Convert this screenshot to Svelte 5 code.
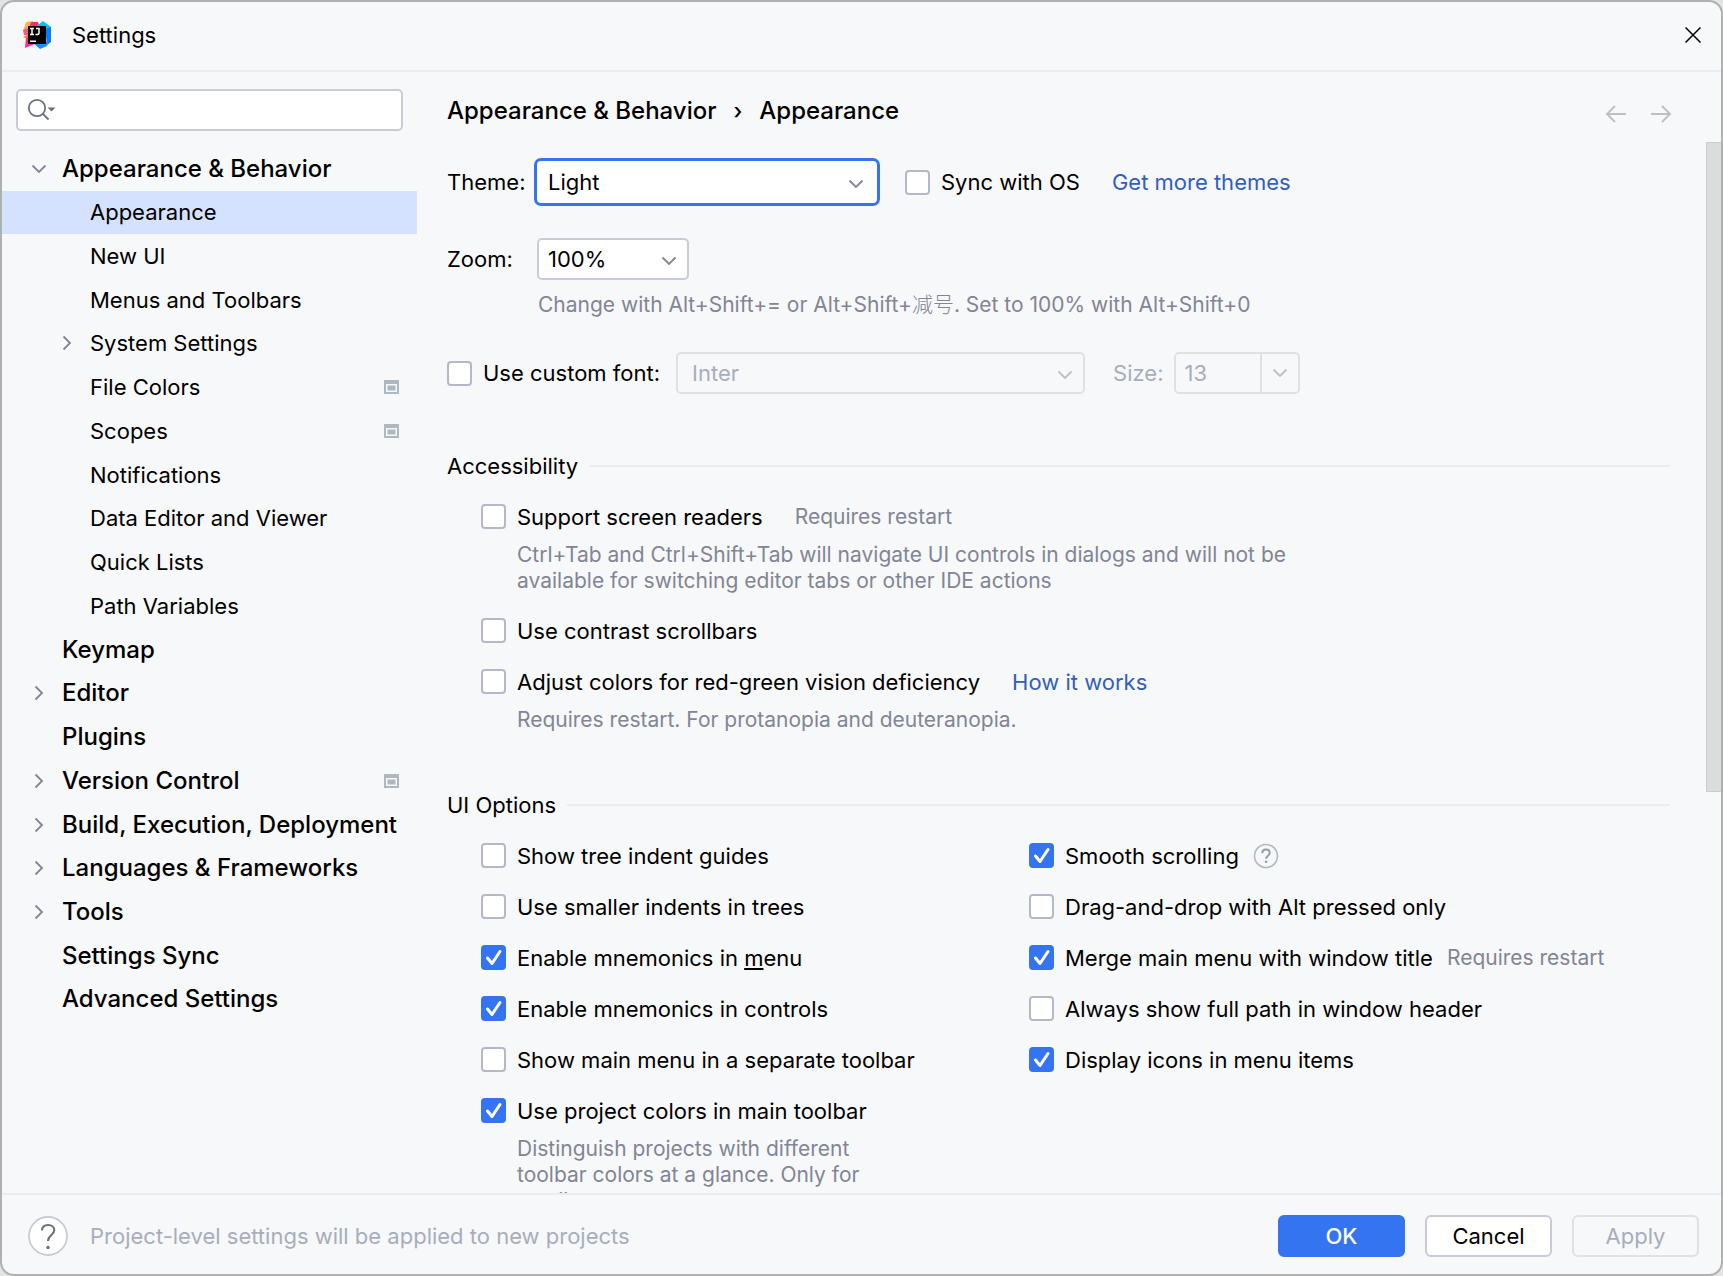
<script lang="ts">
	interface TreeItem {
		label: string;
		level: number;
		arrow?: 'open' | 'closed';
		project?: boolean;
		selected?: boolean;
	}

	interface Option {
		label: string;
		checked: boolean;
		mnemonic?: string;
		note?: string;
		help?: boolean;
		hint?: string;
	}

	const tree: TreeItem[] = [
		{ label: 'Appearance & Behavior', level: 0, arrow: 'open' },
		{ label: 'Appearance', level: 1, selected: true },
		{ label: 'New UI', level: 1 },
		{ label: 'Menus and Toolbars', level: 1 },
		{ label: 'System Settings', level: 1, arrow: 'closed' },
		{ label: 'File Colors', level: 1, project: true },
		{ label: 'Scopes', level: 1, project: true },
		{ label: 'Notifications', level: 1 },
		{ label: 'Data Editor and Viewer', level: 1 },
		{ label: 'Quick Lists', level: 1 },
		{ label: 'Path Variables', level: 1 },
		{ label: 'Keymap', level: 0 },
		{ label: 'Editor', level: 0, arrow: 'closed' },
		{ label: 'Plugins', level: 0 },
		{ label: 'Version Control', level: 0, arrow: 'closed', project: true },
		{ label: 'Build, Execution, Deployment', level: 0, arrow: 'closed' },
		{ label: 'Languages & Frameworks', level: 0, arrow: 'closed' },
		{ label: 'Tools', level: 0, arrow: 'closed' },
		{ label: 'Settings Sync', level: 0 },
		{ label: 'Advanced Settings', level: 0 }
	];

	let leftOptions: Option[] = $state([
		{ label: 'Show tree indent guides', checked: false },
		{ label: 'Use smaller indents in trees', checked: false },
		{ label: 'Enable mnemonics in ', mnemonic: 'menu', checked: true },
		{ label: 'Enable mnemonics in controls', checked: true },
		{ label: 'Show main menu in a separate toolbar', checked: false },
		{
			label: 'Use project colors in main toolbar',
			checked: true,
			hint: 'Distinguish projects with different toolbar colors at a glance. Only for small'
		}
	]);

	let rightOptions: Option[] = $state([
		{ label: 'Smooth scrolling', checked: true, help: true },
		{ label: 'Drag-and-drop with Alt pressed only', checked: false },
		{ label: 'Merge main menu with window title', checked: true, note: 'Requires restart' },
		{ label: 'Always show full path in window header', checked: false },
		{ label: 'Display icons in menu items', checked: true }
	]);

	let syncWithOs = $state(false);
	let customFont = $state(false);
	let screenReaders = $state(false);
	let contrastScrollbars = $state(false);
	let adjustColors = $state(false);
</script>

{#snippet chevron()}
	<svg class="chevron" width="16" height="10" viewBox="0 0 16 10" aria-hidden="true">
		<path d="M1.5 1.5 8 8l6.500-6.500" fill="none" stroke="currentColor" stroke-width="1.800" />
	</svg>
{/snippet}

{#snippet optionList(options: Option[])}
	<div class="column">
		{#each options as option}
			<div class="option">
				<div class="line">
					<label class="check">
						<input type="checkbox" bind:checked={option.checked} />
						<span
							>{option.label}{#if option.mnemonic}<u>{option.mnemonic[0]}</u>{option.mnemonic.slice(
									1
								)}{/if}</span
						>
					</label>
					{#if option.help}
						<button class="context-help" aria-label="Help">
							<svg width="26" height="26" viewBox="0 0 26 26">
								<circle cx="13" cy="13" r="11.500" fill="none" stroke="#aeb9c0" stroke-width="1.600" />
								<path
									d="M9.300 10.300c0-2.300 1.500-3.700 3.700-3.700s3.700 1.300 3.700 3.300c0 2.700-3.600 2.900-3.600 5.800"
									fill="none"
									stroke="#929ea5"
									stroke-width="2"
								/>
								<circle cx="13.100" cy="18.800" r="1.300" fill="#929ea5" />
							</svg>
						</button>
					{/if}
					{#if option.note}
						<span class="note">{option.note}</span>
					{/if}
				</div>
				{#if option.hint}
					<p class="hint narrow">{option.hint}</p>
				{/if}
			</div>
		{/each}
	</div>
{/snippet}

<div class="window">
	<header class="titlebar">
		<svg class="logo" width="28" height="28" viewBox="0 0 28 28" aria-hidden="true">
			<path d="M3 1 10 0l2 6-9 6-3-2z" fill="#fdb64e" />
			<path d="M8 1h7l2 6H6z" fill="#fe2d6b" />
			<path d="m0 9 7-3v9l-6-1z" fill="#f7509c" />
			<path d="m0 16 7-3v6z" fill="#fc801d" />
			<path d="m15 4 5-4 8 6v4l-4 2-9-4z" fill="#07c3f2" />
			<path d="m22 8 6-2v15l-4 3z" fill="#087cfa" />
			<path d="m3 17 3-1 6 7-10 4z" fill="#fe2d8b" />
			<path d="m10 22 15-2-1 5-7 3z" fill="#178ff5" />
			<rect x="5" y="5" width="18" height="18" fill="#000" />
			<path
				d="M7 7.500h4M9 7.500v6M7 13.500h4M13 7.500h3v4.500q0 1.500-1.500 1.500h-2"
				fill="none"
				stroke="#fff"
				stroke-width="1.500"
			/>
			<rect x="7" y="19.500" width="6" height="1.500" fill="#fff" />
		</svg>
		<h1>Settings</h1>
		<button class="close" aria-label="Close">
			<svg width="16" height="16" viewBox="0 0 16 16">
				<path d="m.5.5 15 15m0-15-15 15" stroke="#000" stroke-width="1.500" />
			</svg>
		</button>
	</header>

	<div class="body">
		<aside class="sidebar">
			<div class="search">
				<svg width="30" height="24" viewBox="0 0 30 24" aria-hidden="true">
					<circle cx="10" cy="10" r="8.200" fill="none" stroke="#6c707e" stroke-width="1.800" />
					<path d="m16 16 5.500 5.500" stroke="#6c707e" stroke-width="1.800" />
					<path d="M20.500 9.500h8L24.500 13.500z" fill="#6c707e" />
				</svg>
				<input type="text" aria-label="Search settings" />
			</div>
			<ul class="tree">
				{#each tree as item}
					<li>
						<button class="node" class:child={item.level === 1} class:selected={item.selected}>
							<span class="arrow" class:closed={item.arrow === 'closed'}>
								{#if item.arrow}{@render chevron()}{/if}
							</span>
							<span class="name">{item.label}</span>
							{#if item.project}
								<svg class="project" width="15" height="14" viewBox="0 0 15 14" aria-hidden="true">
									<path d="M0 0h15v14H0zM2 4v8h11V4z" fill="#adb8c0" fill-rule="evenodd" />
									<rect x="3.500" y="5.500" width="8" height="5" fill="#adb8c0" />
								</svg>
							{/if}
						</button>
					</li>
				{/each}
			</ul>
		</aside>

		<main>
			<div class="crumbs">
				<h2>Appearance &amp; Behavior</h2>
				<span class="sep">›</span>
				<h2>Appearance</h2>
				<nav>
					<button aria-label="Back">
						<svg width="22" height="18" viewBox="0 0 22 18">
							<path d="M21 9H2m8-8L2 9l8 8" fill="none" stroke="#bfbfc0" stroke-width="1.800" />
						</svg>
					</button>
					<button aria-label="Forward">
						<svg width="22" height="18" viewBox="0 0 22 18">
							<path d="M1 9h19m-8-8 8 8-8 8" fill="none" stroke="#bfbfc0" stroke-width="1.800" />
						</svg>
					</button>
				</nav>
			</div>

			<div class="scroll">
				<div class="row theme">
					<label class="caption" for="theme">Theme:</label>
					<div class="select focused">
						<select id="theme">
							<option>Light</option>
						</select>
						{@render chevron()}
					</div>
					<label class="check">
						<input type="checkbox" bind:checked={syncWithOs} />
						<span>Sync with OS</span>
					</label>
					<a class="more" href="#themes">Get more themes</a>
				</div>

				<div class="row zoom">
					<label class="caption" for="zoom">Zoom:</label>
					<div class="select">
						<select id="zoom">
							<option>100%</option>
						</select>
						{@render chevron()}
					</div>
				</div>
				<p class="hint zoom-hint">
					Change with Alt+Shift+= or Alt+Shift+<span class="cjk">减号</span>. Set to 100% with
					Alt+Shift+0
				</p>

				<div class="row font">
					<label class="check">
						<input type="checkbox" bind:checked={customFont} />
						<span>Use custom font:</span>
					</label>
					<div class="select wide disabled">
						<select aria-label="Font" disabled>
							<option>Inter</option>
						</select>
						{@render chevron()}
					</div>
					<label class="size" for="size">Size:</label>
					<div class="combo">
						<input id="size" type="text" value="13" disabled />
						<button disabled aria-label="Font sizes">{@render chevron()}</button>
					</div>
				</div>

				<section>
					<h3>Accessibility</h3>
					<div class="group">
						<div class="line">
							<label class="check">
								<input type="checkbox" bind:checked={screenReaders} />
								<span>Support screen readers</span>
							</label>
							<span class="note far">Requires restart</span>
						</div>
						<p class="hint">
							Ctrl+Tab and Ctrl+Shift+Tab will navigate UI controls in dialogs and will not be
							available for switching editor tabs or other IDE actions
						</p>
						<div class="line after-hint">
							<label class="check">
								<input type="checkbox" bind:checked={contrastScrollbars} />
								<span>Use contrast scrollbars</span>
							</label>
						</div>
						<div class="line next">
							<label class="check">
								<input type="checkbox" bind:checked={adjustColors} />
								<span>Adjust colors for red-green vision deficiency</span>
							</label>
							<a class="more" href="#vision">How it works</a>
						</div>
						<p class="hint">Requires restart. For protanopia and deuteranopia.</p>
					</div>
				</section>

				<section>
					<h3>UI Options</h3>
					<div class="group columns">
						{@render optionList(leftOptions)}
						{@render optionList(rightOptions)}
					</div>
				</section>
			</div>
			<div class="scrollbar"></div>
		</main>
	</div>

	<footer>
		<button class="help" aria-label="Help">
			<svg width="40" height="40" viewBox="0 0 40 40">
				<circle cx="20" cy="20" r="19" fill="#fff" stroke="#c9ccd6" stroke-width="1.800" />
				<path
					d="M14 14.500c0-3.500 2.600-5.500 6.200-5.500s6.100 2.200 6.100 5.300c0 4.700-6.300 4.700-6.300 10.700"
					fill="none"
					stroke="#6c707e"
					stroke-width="2"
				/>
				<circle cx="20" cy="31.500" r="1.700" fill="#6c707e" />
			</svg>
		</button>
		<p>Project-level settings will be applied to new projects</p>
		<button class="btn primary">OK</button>
		<button class="btn">Cancel</button>
		<button class="btn" disabled>Apply</button>
	</footer>
</div>

<style>
	:global(body) {
		background: #e4e4e5;
	}

	.window {
		box-sizing: border-box;
		display: flex;
		flex-direction: column;
		height: 100vh;
		overflow: hidden;
		border: 2px solid #b0b0b1;
		border-radius: 14px;
		background: #f7f8fa;
		color: #000;
		font-family: Inter, 'Noto Sans CJK SC', sans-serif;
		font-size: 22px;
		line-height: 28px;
	}

	.window * {
		box-sizing: border-box;
	}

	button,
	input,
	select {
		margin: 0;
		padding: 0;
		border: none;
		background: none;
		color: inherit;
		font: inherit;
	}

	svg {
		display: block;
		flex: none;
	}

	h1,
	h2,
	h3,
	p,
	ul {
		margin: 0;
		padding: 0;
		font-size: inherit;
		font-weight: 400;
	}

	a {
		color: #315fbd;
		text-decoration: none;
	}

	/* title bar */
	.titlebar {
		display: flex;
		flex: none;
		align-items: center;
		height: 70px;
		padding: 0 20px 2px 21px;
		border-bottom: 2px solid #ebecf0;
	}

	.titlebar h1 {
		flex: 1;
		margin-left: 21px;
	}

	/* sidebar */
	.body {
		display: flex;
		flex: 1;
		min-height: 0;
	}

	.sidebar {
		display: flex;
		flex: none;
		flex-direction: column;
		width: 415px;
		padding-top: 17px;
	}

	.search {
		display: flex;
		flex: none;
		align-items: center;
		height: 42px;
		margin: 0 14px;
		padding: 0 9px;
		border: 2px solid #c9ccd6;
		border-radius: 5px;
		background: #fff;
	}

	.search input {
		flex: 1;
		min-width: 0;
		outline: none;
	}

	.tree {
		display: flex;
		flex: 1;
		flex-direction: column;
		justify-content: space-between;
		max-height: 874px;
		margin-top: 16px;
		list-style: none;
	}

	.node {
		display: flex;
		align-items: center;
		width: 100%;
		height: 43px;
		padding: 0 18px 0 29px;
		font-size: 24px;
		font-weight: 500;
		text-align: left;
	}

	.node.child {
		padding-left: 57px;
		font-size: 22px;
		font-weight: 400;
	}

	.selected {
		background: #d4e2ff;
	}

	.arrow {
		width: 31px;
		color: #818594;
	}

	.arrow.closed .chevron {
		transform: rotate(-90deg);
	}

	.name {
		flex: 1;
		white-space: nowrap;
	}

	/* right-hand page */
	main {
		position: relative;
		display: flex;
		flex: 1;
		flex-direction: column;
		min-width: 0;
	}

	.crumbs {
		display: flex;
		flex: none;
		align-items: center;
		height: 78px;
		padding: 0 49px 0 30px;
	}

	h2 {
		font-size: 24px;
		font-weight: 500;
	}

	.sep {
		margin: 0 17px;
		font-weight: 500;
	}

	nav {
		display: flex;
		gap: 23px;
		margin-left: auto;
		padding-top: 6px;
	}

	.scroll {
		flex: 1;
		min-height: 0;
		overflow: hidden;
		padding: 8px 51px 0 30px;
	}

	.scrollbar {
		position: absolute;
		top: 70px;
		right: 0;
		width: 15px;
		height: 58%;
		border: 1px solid #cbccce;
		border-right: none;
		background: #dbdcde;
	}

	.row,
	.line {
		display: flex;
		align-items: center;
	}

	.row {
		height: 42px;
	}

	.row.theme {
		height: 48px;
	}

	.row.zoom {
		margin-top: 32px;
	}

	.row.font {
		margin-top: 34px;
	}

	.caption {
		width: 90px;
	}

	.select {
		position: relative;
		width: 152px;
		height: 42px;
		color: #818594;
	}

	.select select {
		width: 100%;
		height: 100%;
		padding: 0 36px 0 9px;
		border: 2px solid #c9ccd6;
		border-radius: 5px;
		background: #fff;
		color: #000;
		appearance: none;
		outline: none;
	}

	.select .chevron {
		position: absolute;
		top: 18px;
		right: 12px;
		pointer-events: none;
	}

	.select.focused {
		width: 346px;
		height: 48px;
		margin: 0 25px 0 -3px;
	}

	.focused select {
		padding-left: 11px;
		border: 3px solid #3574f0;
		border-radius: 7px;
	}

	.focused .chevron {
		top: 21px;
		right: 16px;
	}

	.select.wide {
		width: 409px;
		margin-left: 16px;
	}

	.select.disabled {
		color: #bfbfc0;
	}

	.disabled select {
		padding-left: 14px;
		border-color: #dfe1e5;
		background: none;
		color: #a8adbd;
		opacity: 1;
	}

	.size {
		margin: 0 11px 0 28px;
		color: #a8adbd;
	}

	.combo {
		display: flex;
		width: 126px;
		height: 42px;
		border: 2px solid #dfe1e5;
		border-radius: 5px;
		color: #a8adbd;
	}

	.combo input {
		flex: 1;
		min-width: 0;
		padding-left: 8px;
	}

	.combo button {
		display: flex;
		align-items: center;
		justify-content: center;
		width: 38px;
		border-left: 2px solid #dfe1e5;
		color: #bfbfc0;
	}

	.check {
		display: flex;
		align-items: center;
		gap: 11px;
		height: 25px;
		white-space: nowrap;
	}

	.check input {
		flex: none;
		width: 25px;
		height: 25px;
		border: 2px solid #b4b8c8;
		border-radius: 4px;
		background: #fff;
		appearance: none;
	}

	.check input:checked {
		border-color: #3574f0;
		background: #3574f0
			url("data:image/svg+xml,%3Csvg xmlns='http://www.w3.org/2000/svg' viewBox='0 0 21 21'%3E%3Cpath d='m4.500 11 4.500 5.500 8-12' fill='none' stroke='%23fff' stroke-width='3' stroke-linecap='round' stroke-linejoin='round'/%3E%3C/svg%3E")
			center / 21px 21px no-repeat;
	}

	.more {
		margin-left: 32px;
	}

	.hint,
	.note {
		color: #818594;
		font-size: 21px;
		line-height: 26px;
	}

	.hint {
		max-width: 800px;
		margin: 13px 0 0 36px;
	}

	.hint.zoom-hint {
		margin: 12px 0 0 91px;
	}

	.cjk {
		font-family: 'Noto Sans CJK SC', sans-serif;
		font-weight: 300;
		line-height: 20px;
	}

	.hint.narrow {
		max-width: 370px;
	}

	.note {
		margin-left: 14px;
		white-space: nowrap;
	}

	.note.far {
		margin-left: 32px;
	}

	section {
		margin-top: 58px;
	}

	h3 {
		display: flex;
		align-items: center;
		gap: 11px;
	}

	h3::after {
		flex: 1;
		height: 2px;
		background: #ebecf0;
		content: '';
	}

	.group {
		margin-top: 24px;
		padding-left: 34px;
	}

	.line {
		height: 25px;
	}

	.line.next {
		margin-top: 26px;
	}

	.line.after-hint {
		margin-top: 24px;
	}

	.columns {
		display: grid;
		grid-template-columns: 548px 1fr;
	}

	.column {
		display: flex;
		flex-direction: column;
		gap: 26px;
	}

	.context-help {
		margin-left: 14px;
	}

	/* bottom bar */
	footer {
		display: flex;
		flex: none;
		align-items: center;
		height: 81px;
		padding: 2px 22px 0 26px;
		border-top: 2px solid #ebecf0;
	}

	footer p {
		flex: 1;
		margin-left: 22px;
		color: #a8adbd;
	}

	.btn {
		width: 127px;
		height: 42px;
		margin-left: 20px;
		border: 2px solid #c9ccd6;
		border-radius: 6px;
		background: #fff;
	}

	.btn.primary {
		border-color: #3574f0;
		background: #3574f0;
		color: #fff;
		font-weight: 500;
	}

	.btn:disabled {
		border-color: #dfe1e5;
		background: none;
		color: #a8adbd;
	}
</style>
